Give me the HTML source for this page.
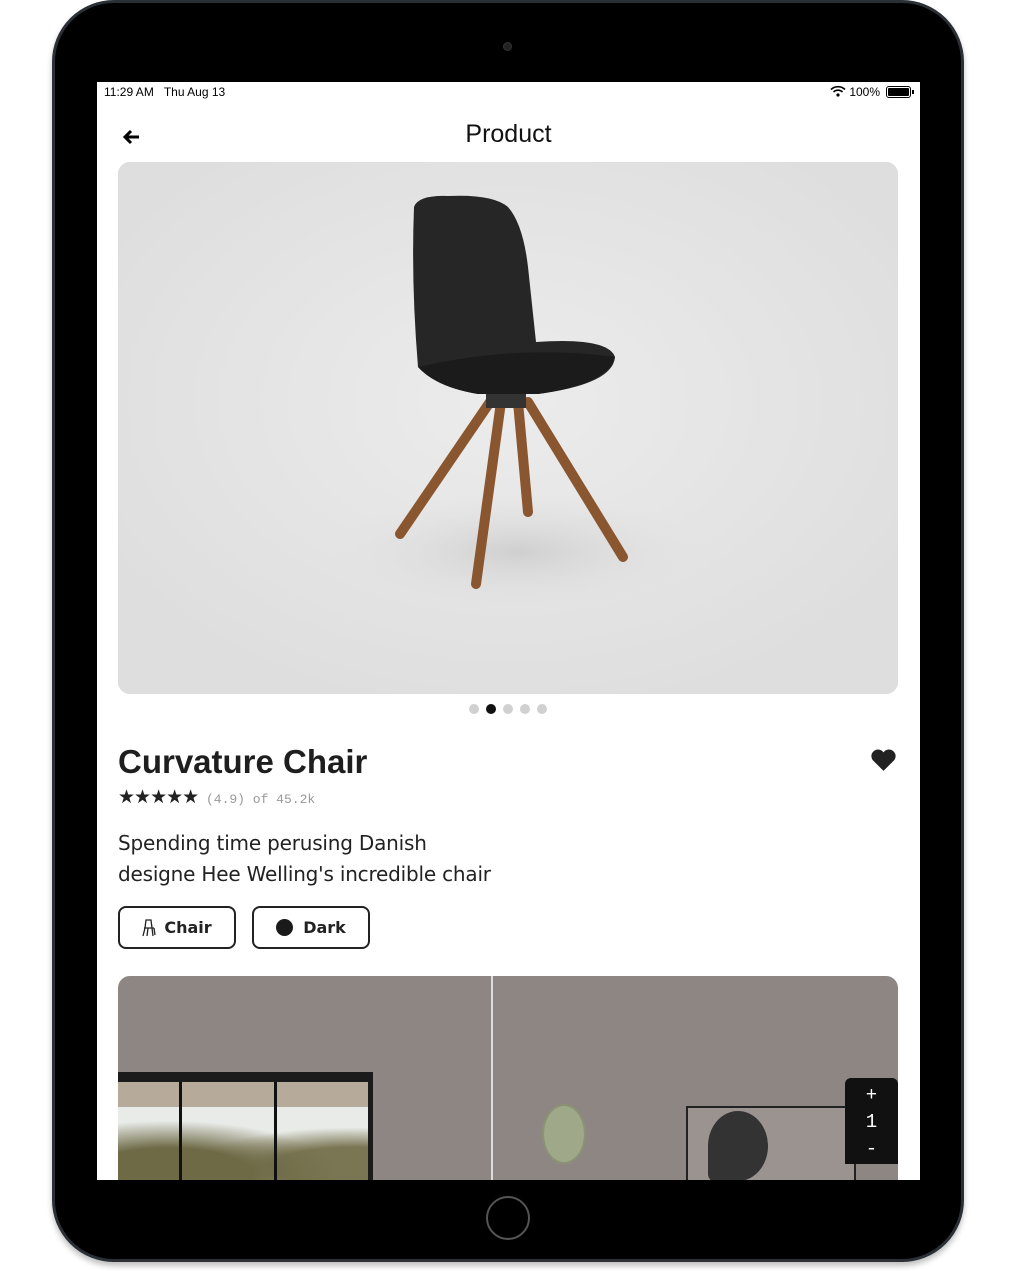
<!DOCTYPE html>
<html><head><meta charset="utf-8"><style>
*{margin:0;padding:0;box-sizing:border-box}
body{width:1016px;height:1271px;background:#fff;position:relative;overflow:hidden;font-family:"Liberation Sans",sans-serif}
.dev{position:absolute;left:52px;top:0;width:912px;height:1262px;background:#000;border-radius:62px;border:3px solid #2b3036;box-shadow:0 4px 6px rgba(0,0,0,.25)}
.screen{position:absolute;left:97px;top:82px;width:823px;height:1098px;background:#fff;overflow:hidden}
.abs{position:absolute}
</style></head><body>
<div class="dev"></div>
<div class="abs" style="left:503px;top:42px;width:9px;height:9px;border-radius:50%;background:#222;border:1px solid #333"></div>
<div class="abs" style="left:486px;top:1196px;width:44px;height:44px;border-radius:50%;border:2px solid #555"></div>
<div class="screen">
  <div class="abs" style="left:7px;top:3px;font-size:12px;color:#000">11:29 AM&nbsp;&nbsp;&nbsp;Thu Aug 13</div>
  <div class="abs" style="left:733px;top:3px;font-size:12px;color:#000">
    <svg width="16" height="12" viewBox="0 0 16 12" style="vertical-align:-1px"><path d="M1 4.5a10 10 0 0 1 14 0M3.5 7a6.5 6.5 0 0 1 9 0" stroke="#000" stroke-width="1.6" fill="none"/><circle cx="8" cy="10" r="1.6"/></svg> 100%
  </div>
  <div class="abs" style="left:789px;top:4px;width:25px;height:12px;border:1px solid #000;border-radius:3px;padding:1px"><div style="width:100%;height:100%;background:#000;border-radius:1px"></div></div>
  <div class="abs" style="left:815px;top:8px;width:2px;height:4px;background:#000"></div>
  <svg class="abs" style="left:25px;top:47px" width="18" height="16" viewBox="0 0 18 16"><path d="M9 2L3 8l6 6M3 8h14" stroke="#000" stroke-width="3" fill="none"/></svg>
  <div class="abs" style="left:0;width:823px;top:38px;text-align:center;font-size:25px;color:#111">Product</div>
  <div class="abs" style="left:21px;top:80px;width:780px;height:532px;background:#e2e2e2;border-radius:12px;overflow:hidden">
    <svg width="780" height="532" viewBox="0 0 780 532">
      <defs><radialGradient id="bg" cx="50%" cy="45%" r="60%"><stop offset="0" stop-color="#ececec"/><stop offset="1" stop-color="#dedede"/></radialGradient>
      <radialGradient id="sh" cx="50%" cy="50%" r="50%"><stop offset="0" stop-color="#cfcfcf"/><stop offset="1" stop-color="#e2e2e2" stop-opacity="0"/></radialGradient></defs>
      <rect width="780" height="532" fill="url(#bg)"/>
      <ellipse cx="400" cy="390" rx="190" ry="60" fill="url(#sh)"/>
      <path d="M372 240L282 372M383 240L358 422M400 240L410 350M410 240L505 395" stroke="#8a5630" stroke-width="10" stroke-linecap="round"/>
      <path d="M296 45Q300 33 330 34Q375 32 390 45Q405 62 410 105L418 180Q490 175 497 195Q495 222 420 232L360 232Q318 225 300 205Q293 120 296 45Z" fill="#262626"/>
      <path d="M300 205Q400 182 497 195Q490 222 420 232L360 232Q318 225 300 205Z" fill="#1b1b1b"/>
      <rect x="368" y="232" width="40" height="14" fill="#333"/>
    </svg>
  </div>
  <div class="abs" style="left:372px;top:622px;display:flex;gap:7px">
    <i style="width:10px;height:10px;border-radius:50%;background:#d0d0d0"></i><i style="width:10px;height:10px;border-radius:50%;background:#111"></i><i style="width:10px;height:10px;border-radius:50%;background:#d0d0d0"></i><i style="width:10px;height:10px;border-radius:50%;background:#d0d0d0"></i><i style="width:10px;height:10px;border-radius:50%;background:#d0d0d0"></i>
  </div>
  <div class="abs" style="left:21px;top:661px;font-size:33px;font-weight:bold;color:#1e1e1e;font-family:'Liberation Sans',sans-serif">Curvature Chair</div>
  <svg class="abs" style="left:773px;top:666px" width="27" height="24" viewBox="0 0 24 22"><path d="M12 21L2 11A5.5 5.5 0 0 1 12 4a5.5 5.5 0 0 1 10 7Z" fill="#222"/></svg>
  <div class="abs" style="left:21px;top:704px;font-size:19px;color:#222;letter-spacing:-1px">★★★★★<span style="font-family:'Liberation Mono',monospace;font-size:13px;color:#999;letter-spacing:0"> (4.9) of 45.2k</span></div>
  <div class="abs" style="left:21px;top:746px;font-size:20px;line-height:31px;color:#222;font-family:'DejaVu Sans',sans-serif;letter-spacing:-0.2px">Spending time perusing Danish<br>designe Hee Welling's incredible chair</div>
  <div class="abs" style="left:21px;top:824px;width:118px;height:43px;border:2px solid #222;border-radius:8px;font-weight:bold;font-size:16px;display:flex;align-items:center;justify-content:center;gap:8px;color:#222;font-family:'DejaVu Sans',sans-serif"><svg width="14" height="18" viewBox="0 0 14 18"><path d="M4 1L9 1L10 9H3ZM2 9H12M3 9L1 17M6 9L5 17M10 9L11 17M12 9L13 16" stroke="#222" stroke-width="1.3" fill="none"/></svg>Chair</div>
  <div class="abs" style="left:155px;top:824px;width:118px;height:43px;border:2px solid #222;border-radius:8px;font-weight:bold;font-size:16px;display:flex;align-items:center;justify-content:center;gap:10px;color:#222;font-family:'DejaVu Sans',sans-serif"><i style="width:17px;height:17px;border-radius:50%;background:#1a1a1a;display:inline-block"></i>Dark</div>
  <div class="abs" style="left:21px;top:894px;width:780px;height:260px;background:#8e8683;border-radius:12px 12px 0 0;overflow:hidden">
    <div class="abs" style="left:373px;top:0;width:2px;height:260px;background:#ddd"></div>
    <div class="abs" style="left:0;top:96px;width:255px;height:120px;background:#1b1b1b"></div>
    <div class="abs" style="left:0;top:106px;width:250px;height:110px;background:linear-gradient(#b6ab9a 0,#b6ab9a 25px,#e8ebe8 25px)"></div>
    <div class="abs" style="left:0;top:135px;width:250px;height:80px;background:radial-gradient(ellipse at 20% 80%,#6e6a46 30%,transparent 60%),radial-gradient(ellipse at 95% 70%,#7a7552 25%,transparent 50%)"></div>
    <div class="abs" style="left:61px;top:106px;width:3px;height:110px;background:#111"></div>
    <div class="abs" style="left:156px;top:106px;width:3px;height:110px;background:#111"></div>
    <div class="abs" style="left:424px;top:128px;width:44px;height:60px;border-radius:50%;background:#9fa888;border:2px solid #8a9374"></div>
    <div class="abs" style="left:568px;top:130px;width:170px;height:100px;border:2px solid #222;background:#9b9390"></div>
    <div class="abs" style="left:590px;top:135px;width:60px;height:70px;border-radius:50% 50% 50% 10%;background:#333"></div>
    <div class="abs" style="left:727px;top:102px;width:53px;height:86px;background:#111;border-radius:6px 6px 0 0;color:#fff;font-family:'Liberation Mono',monospace;font-size:19px;text-align:center;line-height:27px;padding-top:4px">+<br>1<br>-</div>
  </div>
</div>
</body></html>
